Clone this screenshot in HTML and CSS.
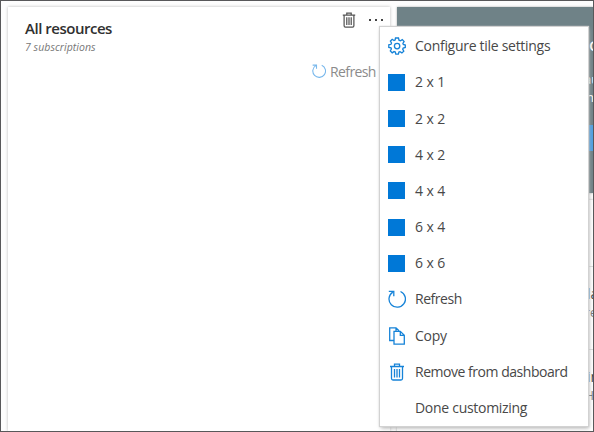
FILE: index.html
```html
<!DOCTYPE html>
<html lang="en">
<head>
<meta charset="utf-8">
<title>Dashboard</title>
<link rel="stylesheet" href="styles.css">
</head>
<body>
<svg class="defs" width="0" height="0">
  <symbol id="refresh" viewBox="0 0 18 18"><path d="M12.500 1.500A8.200 8.200 0 1 1 4.800 2.100M.8 1.400H5.800V6.200" /></symbol>
  <symbol id="trash" viewBox="0 0 18 18"><path d="M2 3.500H16M6.500 3.300V1.200H11.500V3.300M3.500 3.500V15.500Q3.500 17 5 17H13Q14.500 17 14.500 15.500V3.500M6.500 6V14.500M9 6V14.500M11.500 6V14.500" /></symbol>
</svg>
<div class="frame">
  <main class="tile">
    <header class="tile-head">
      <div class="titles">
        <h1>All resources</h1>
        <p>7 subscriptions</p>
      </div>
      <div class="actions">
        <svg class="bin"><use href="#trash"/></svg>
        <span class="dots"><i></i><i></i><i></i></span>
      </div>
    </header>
    <div class="tile-refresh"><svg><use href="#refresh"/></svg><span>Refresh</span></div>
    <div class="rows"></div>
  </main>
  <aside class="side">
    <section class="promo">
      <span class="promo-title">C</span>
      <span class="promo-line">au</span>
      <span class="promo-line">n</span>
      <div class="promo-button"></div>
    </section>
    <section class="list">
      <div class="entry first"></div>
      <div class="entry"><b>la</b><span>re</span></div>
      <div class="entry"><b>in</b><span>Ha</span></div>
    </section>
  </aside>
  <ul class="menu">
    <li><svg viewBox="0 0 18 18"><path d="M7.500 1H10.500L11 3.200L12.400 3.800L14.300 2.600L16.100 4.500L14.900 6.400L15.300 7.500L17.300 8V10.500L15.200 11L14.700 12.200L15.800 14.100L13.900 15.900L12 14.700L10.900 15.100L10.400 17.200H7.800L7.300 15.100L6 14.600L4.200 15.800L2.300 13.900L3.400 12L3 10.900L.8 10.400V7.800L3 7.300L3.500 6L2.400 4.200L4.200 2.300L6 3.500L7.100 3Z"/><circle cx="9.100" cy="9.100" r="2.700"/></svg><span>Configure tile settings</span></li>
    <li><i class="size"></i><span class="dims">2 x 1</span></li>
    <li><i class="size"></i><span class="dims">2 x 2</span></li>
    <li><i class="size"></i><span class="dims">4 x 2</span></li>
    <li><i class="size"></i><span class="dims">4 x 4</span></li>
    <li><i class="size"></i><span class="dims">6 x 4</span></li>
    <li><i class="size"></i><span class="dims">6 x 6</span></li>
    <li><svg><use href="#refresh"/></svg><span class="tight">Refresh</span></li>
    <li><svg viewBox="0 0 18 18"><path d="M6 13.500H1.700V.8H8L11 3.800M6 4.300H12.300L16.300 8.300V17.200H6ZM12.300 4.300V8.300H16.300M8 .8V4"/></svg><span>Copy</span></li>
    <li><svg><use href="#trash"/></svg><span class="tight">Remove from dashboard</span></li>
    <li><i class="blank"></i><span>Done customizing</span></li>
  </ul>
</div>
</body>
</html>
```
FILE: styles.css
```css
* { box-sizing: border-box; }
body { margin: 0; font-family: "Open Sans", "Noto Sans", sans-serif; color: #484848; background: #fff; }
svg { width: 18px; height: 18px; fill: none; stroke: #1683d8; stroke-width: 1.3; flex: none; }
.defs { position: absolute; width: 0; height: 0; }
.frame { position: relative; width: 594px; height: 432px; border: 1px solid #58585a; overflow: hidden; display: flex; gap: 7px; padding: 6px 0 0 7px; background: #fdfdfd; }
.tile { width: 382px; height: 424px; flex: none; background: #fff; box-shadow: 0 0 3px #bbb; display: flex; flex-direction: column; }
.tile-head { display: flex; justify-content: space-between; padding: 11px 7px 0 17px; height: 54px; }
h1 { margin: 0; font-size: 15px; line-height: 20px; font-weight: 600; color: #303030; letter-spacing: -.48px; }
.titles p { margin: 2px 0 0; font-size: 10.5px; line-height: 14px; font-style: italic; color: #777; letter-spacing: .05px; }
.actions { display: flex; gap: 12px; margin-top: -7px; height: 18px; align-items: center; }
.bin { width: 16px; height: 16px; stroke: #555; stroke-width: 1.4; }
.dots { display: flex; gap: 4px; }
.dots i { width: 2px; height: 2px; background: #444; }
.tile-refresh { display: flex; align-items: center; gap: 4px; margin-left: 304px; height: 20px; font-size: 14px; letter-spacing: -.6px; color: #8b8b8b; }
.tile-refresh svg { width: 14px; height: 14px; stroke: #79b8ec; stroke-width: 1.4; }
.rows { margin: 18px 0 0; height: 328px; background: repeating-linear-gradient(#fff 0 34px, #f6f6f6 34px 35px); width: 8px; align-self: flex-end; }
.side { width: 196px; flex: none; display: flex; flex-direction: column; gap: 7px; }
.promo { height: 186px; flex: none; padding: 27px 0 0 190px; background: #6f8287; color: #fff; box-shadow: 0 0 2px #aaa; white-space: nowrap; display: flex; flex-direction: column; }
.promo-title { font-size: 15px; line-height: 22px; font-weight: 600; height: 22px; margin-left: 2px; }
.promo-line { font-size: 13px; line-height: 18px; height: 18px; margin: 14px 0 0 -3px; }
.promo-line + .promo-line { margin: 0 0 0 -1px; }
.promo-button { height: 26px; margin-top: 19px; background: #4fa1e4; margin-left: -20px; }
.list { height: 240px; flex: none; background: #fff; box-shadow: 0 0 2px #aaa; }
.entry { height: 83px; padding: 18px 0 0 190px; border-bottom: 1px solid #ddd; display: flex; flex-direction: column; white-space: nowrap; }
.entry.first { height: 67px; }
.entry b { font-size: 14px; line-height: 18px; font-weight: 400; }
.entry span { font-size: 12px; line-height: 20px; color: #777; margin-left: -2px; }
.menu { position: absolute; left: 379px; top: 26px; width: 208px; height: 399px; margin: 0; padding: 1.2px 0 0; list-style: none; background: #fff; box-shadow: 0 0 1px 1px #d2d2d2, 1px 2px 4px #aaa; }
.menu li { height: 36.18px; display: flex; align-items: center; gap: 9px; padding-left: 8px; font-size: 14px; line-height: 20px; letter-spacing: -.29px; white-space: nowrap; }
.menu .tight { letter-spacing: -.47px; }
.menu .dims { letter-spacing: -.1px; }
.size { width: 17px; height: 17px; margin-right: 1px; background: #0078d7; flex: none; }
.blank { width: 18px; flex: none; }
```
